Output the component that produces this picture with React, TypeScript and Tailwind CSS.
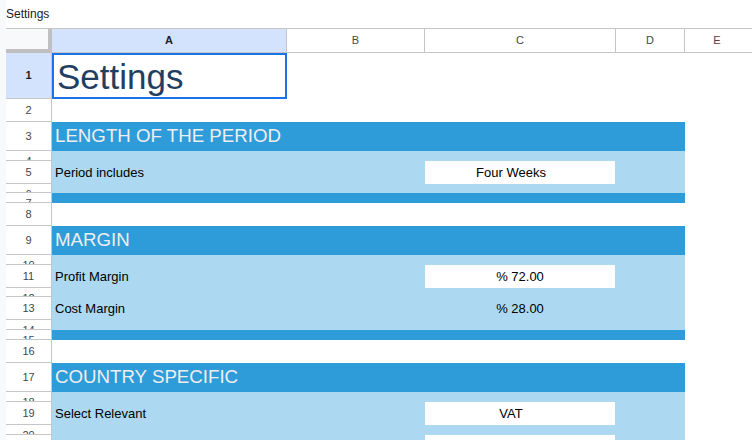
import React from "react";

type Row = {
  n: number;
  h: string;
  small?: boolean;
  t: "title" | "blank" | "band" | "light" | "dark";
  text?: string;
  label?: string;
  box?: string;
  dd?: boolean;
  value?: string;
};

const rows: Row[] = [
  { n: 1, h: "h-[46px]", t: "title" },
  { n: 2, h: "h-[23px]", t: "blank" },
  { n: 3, h: "h-[29px]", t: "band", text: "LENGTH OF THE PERIOD" },
  { n: 4, h: "h-[10px]", small: true, t: "light" },
  { n: 5, h: "h-[23px]", t: "light", label: "Period includes", box: "Four Weeks", dd: true },
  { n: 6, h: "h-[9px]", small: true, t: "light" },
  { n: 7, h: "h-[10px]", small: true, t: "dark" },
  { n: 8, h: "h-[23px]", t: "blank" },
  { n: 9, h: "h-[29px]", t: "band", text: "MARGIN" },
  { n: 10, h: "h-[10px]", small: true, t: "light" },
  { n: 11, h: "h-[23px]", t: "light", label: "Profit Margin", box: "% 72.00" },
  { n: 12, h: "h-[9px]", small: true, t: "light" },
  { n: 13, h: "h-[23px]", t: "light", label: "Cost Margin", value: "% 28.00" },
  { n: 14, h: "h-[10px]", small: true, t: "light" },
  { n: 15, h: "h-[10px]", small: true, t: "dark" },
  { n: 16, h: "h-[23px]", t: "blank" },
  { n: 17, h: "h-[29px]", t: "band", text: "COUNTRY SPECIFIC" },
  { n: 18, h: "h-[10px]", small: true, t: "light" },
  { n: 19, h: "h-[23px]", t: "light", label: "Select Relevant", box: "VAT", dd: true },
  { n: 20, h: "h-[10px]", small: true, t: "light" },
  { n: 21, h: "h-[23px]", t: "light", box: "", dd: true },
];

const cellFont = "[font-family:'Liberation_Sans',Arial,sans-serif]";

function RowHeader({ r }: { r: Row }) {
  const sel = r.n === 1;
  return (
    <div
      className={`${r.h} w-[46px] shrink-0 border-r border-b border-[#c4c7c5] flex justify-center overflow-hidden ${
        r.small ? "items-start" : "items-center"
      } ${sel ? "bg-[#d3e3fd] font-bold text-[#1f1f1f]" : "bg-white text-[#444746]"}`}
    >
      <div className="h-[21px] shrink-0 flex items-center text-[11px] leading-none">{r.n}</div>
    </div>
  );
}

function Cells({ r }: { r: Row }) {
  if (r.t === "title") {
    return (
      <div className={`${r.h} flex`}>
        <div className="w-[235px] h-full border-2 border-[#1a73e8] flex items-center pl-[3px]">
          <span className={`${cellFont} text-[35px] leading-none text-[#233e62]`}>Settings</span>
        </div>
      </div>
    );
  }
  if (r.t === "blank") return <div className={r.h} />;
  if (r.t === "dark") {
    return (
      <div className={`${r.h} flex`}>
        <div className="w-[633px] h-full bg-[#2f9cda]" />
      </div>
    );
  }
  if (r.t === "band") {
    return (
      <div className={`${r.h} flex`}>
        <div className="w-[633px] h-full bg-[#2f9cda] flex items-center pl-[3px]">
          <span className={`${cellFont} text-[18.7px] leading-none text-[#eeeeee]`}>{r.text}</span>
        </div>
      </div>
    );
  }
  return (
    <div className={`${r.h} flex`}>
      <div className={`w-[633px] h-full bg-[#acd8f1] flex ${cellFont} text-[13px] text-black`}>
        <div className="w-[235px] h-full flex items-center pl-[3px]">{r.label}</div>
        <div className="w-[138px] h-full" />
        <div className="w-[191px] h-full flex items-center">
          {r.box !== undefined ? (
            <div
              className={`w-[190px] h-[23px] bg-white flex items-center justify-center ${
                r.dd ? "pr-[18px]" : ""
              }`}
            >
              {r.box}
            </div>
          ) : r.value ? (
            <div className="w-[190px] h-full flex items-center justify-center">{r.value}</div>
          ) : null}
        </div>
      </div>
    </div>
  );
}

export default function App() {
  const cols = [
    { l: "A", w: "w-[235px]", sel: true },
    { l: "B", w: "w-[138px]" },
    { l: "C", w: "w-[191px]" },
    { l: "D", w: "w-[69px]" },
  ];
  return (
    <div className="w-[752px] h-[440px] overflow-hidden bg-white flex [font-family:'Liberation_Sans',Arial,sans-serif]">
      <div className="w-[6px] shrink-0 bg-[#f8f9fa]" />
      <div className="flex-1 flex flex-col min-w-0">
        <div className="h-[29px] shrink-0 border-b border-[#c4c7c5] flex items-center">
          <span className="text-[12px] text-[#202124] leading-none">Settings</span>
        </div>
        <div className="h-[24px] shrink-0 flex">
          <div className="w-[46px] shrink-0 bg-[#f8f9fa] border-r-4 border-b-4 border-[#c0c0c0]" />
          {cols.map((c) => (
            <div
              key={c.l}
              className={`${c.w} shrink-0 border-r border-b border-[#c4c7c5] flex items-center justify-center text-[11px] ${
                c.sel ? "bg-[#d3e3fd] font-bold text-[#1f1f1f]" : "bg-white text-[#444746]"
              }`}
            >
              {c.l}
            </div>
          ))}
          <div className="flex-1 border-b border-[#c4c7c5] flex items-center justify-center text-[11px] text-[#444746] pr-[3px]">
            E
          </div>
        </div>
        {rows.map((r) => (
          <div key={r.n} className="flex shrink-0">
            <RowHeader r={r} />
            <div className="flex-1">
              <Cells r={r} />
            </div>
          </div>
        ))}
      </div>
    </div>
  );
}
